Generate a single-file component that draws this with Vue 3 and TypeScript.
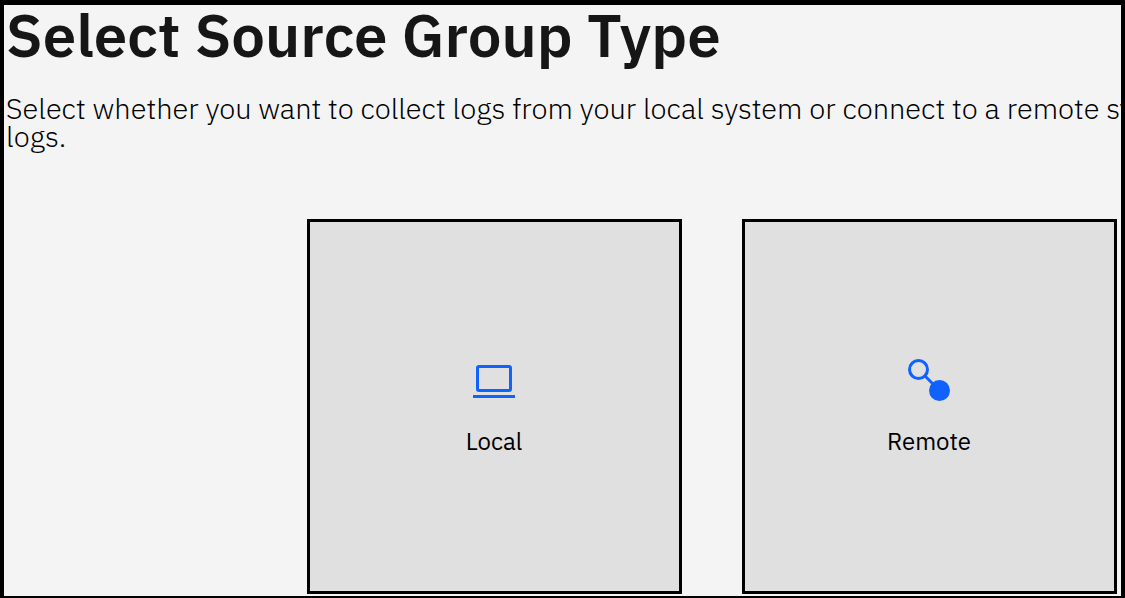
<script setup lang="ts">
import { ref } from 'vue'

type SourceType = 'local' | 'remote'

const options: { id: SourceType; label: string }[] = [
  { id: 'local', label: 'Local' },
  { id: 'remote', label: 'Remote' },
]

const selected = ref<SourceType | null>(null)
</script>

<template>
  <main class="panel">
    <h1 class="title">Select Source Group Type</h1>
    <p class="intro">
      Select whether you want to collect logs from your local system or connect to a remote system<br />logs.
    </p>
    <div class="tiles">
      <button
        v-for="option in options"
        :key="option.id"
        type="button"
        class="tile"
        :aria-pressed="selected === option.id"
        @click="selected = option.id"
      >
        <svg class="icon" viewBox="0 0 32 32" aria-hidden="true">
          <template v-if="option.id === 'local'">
            <rect x="5" y="7" width="22" height="16" rx="1" fill="none" stroke="currentColor" stroke-width="2" />
            <rect x="2" y="26" width="28" height="2" fill="currentColor" />
          </template>
          <template v-else>
            <circle cx="9" cy="9" r="6" fill="none" stroke="currentColor" stroke-width="2" />
            <path d="M13.2 13.2 19 19" stroke="currentColor" stroke-width="2" />
            <circle cx="23" cy="23" r="7" fill="currentColor" />
          </template>
        </svg>
        <span class="label">{{ option.label }}</span>
      </button>
    </div>
  </main>
</template>

<style>
body {
  margin: 0;
  background: #f4f4f4;
}
</style>

<style scoped>
.panel {
  box-sizing: border-box;
  min-height: 100vh;
  padding: 0 4px 2px 2px;
  overflow: hidden;
  border: solid #000;
  border-width: 5px 4px 2px;
  background: #f4f4f4;
  color: #161616;
  font-family: "IBM Plex Sans", "Noto Sans", sans-serif;
}

.title {
  margin: 0;
  font-size: 60px;
  font-weight: 600;
  line-height: 60px;
  white-space: nowrap;
}

.intro {
  margin: 29px 0 0;
  color: #000;
  font-size: 29px;
  font-weight: 300;
  line-height: 28px;
  white-space: nowrap;
}

.tiles {
  display: flex;
  justify-content: flex-end;
  gap: 60px;
  margin-top: 69px;
}

.tile {
  box-sizing: border-box;
  display: flex;
  flex: 1 1 0;
  flex-direction: column;
  align-items: center;
  justify-content: center;
  gap: 21px;
  max-width: 375px;
  aspect-ratio: 1;
  padding: 0 1px 0 0;
  border: 3px solid #000;
  border-radius: 0;
  background: #e0e0e0;
  color: #000;
  font-family: inherit;
  cursor: pointer;
}

.icon {
  width: 48px;
  height: 48px;
  color: #0f62fe;
}

.label {
  font-size: 24px;
  line-height: 32px;
}
</style>
